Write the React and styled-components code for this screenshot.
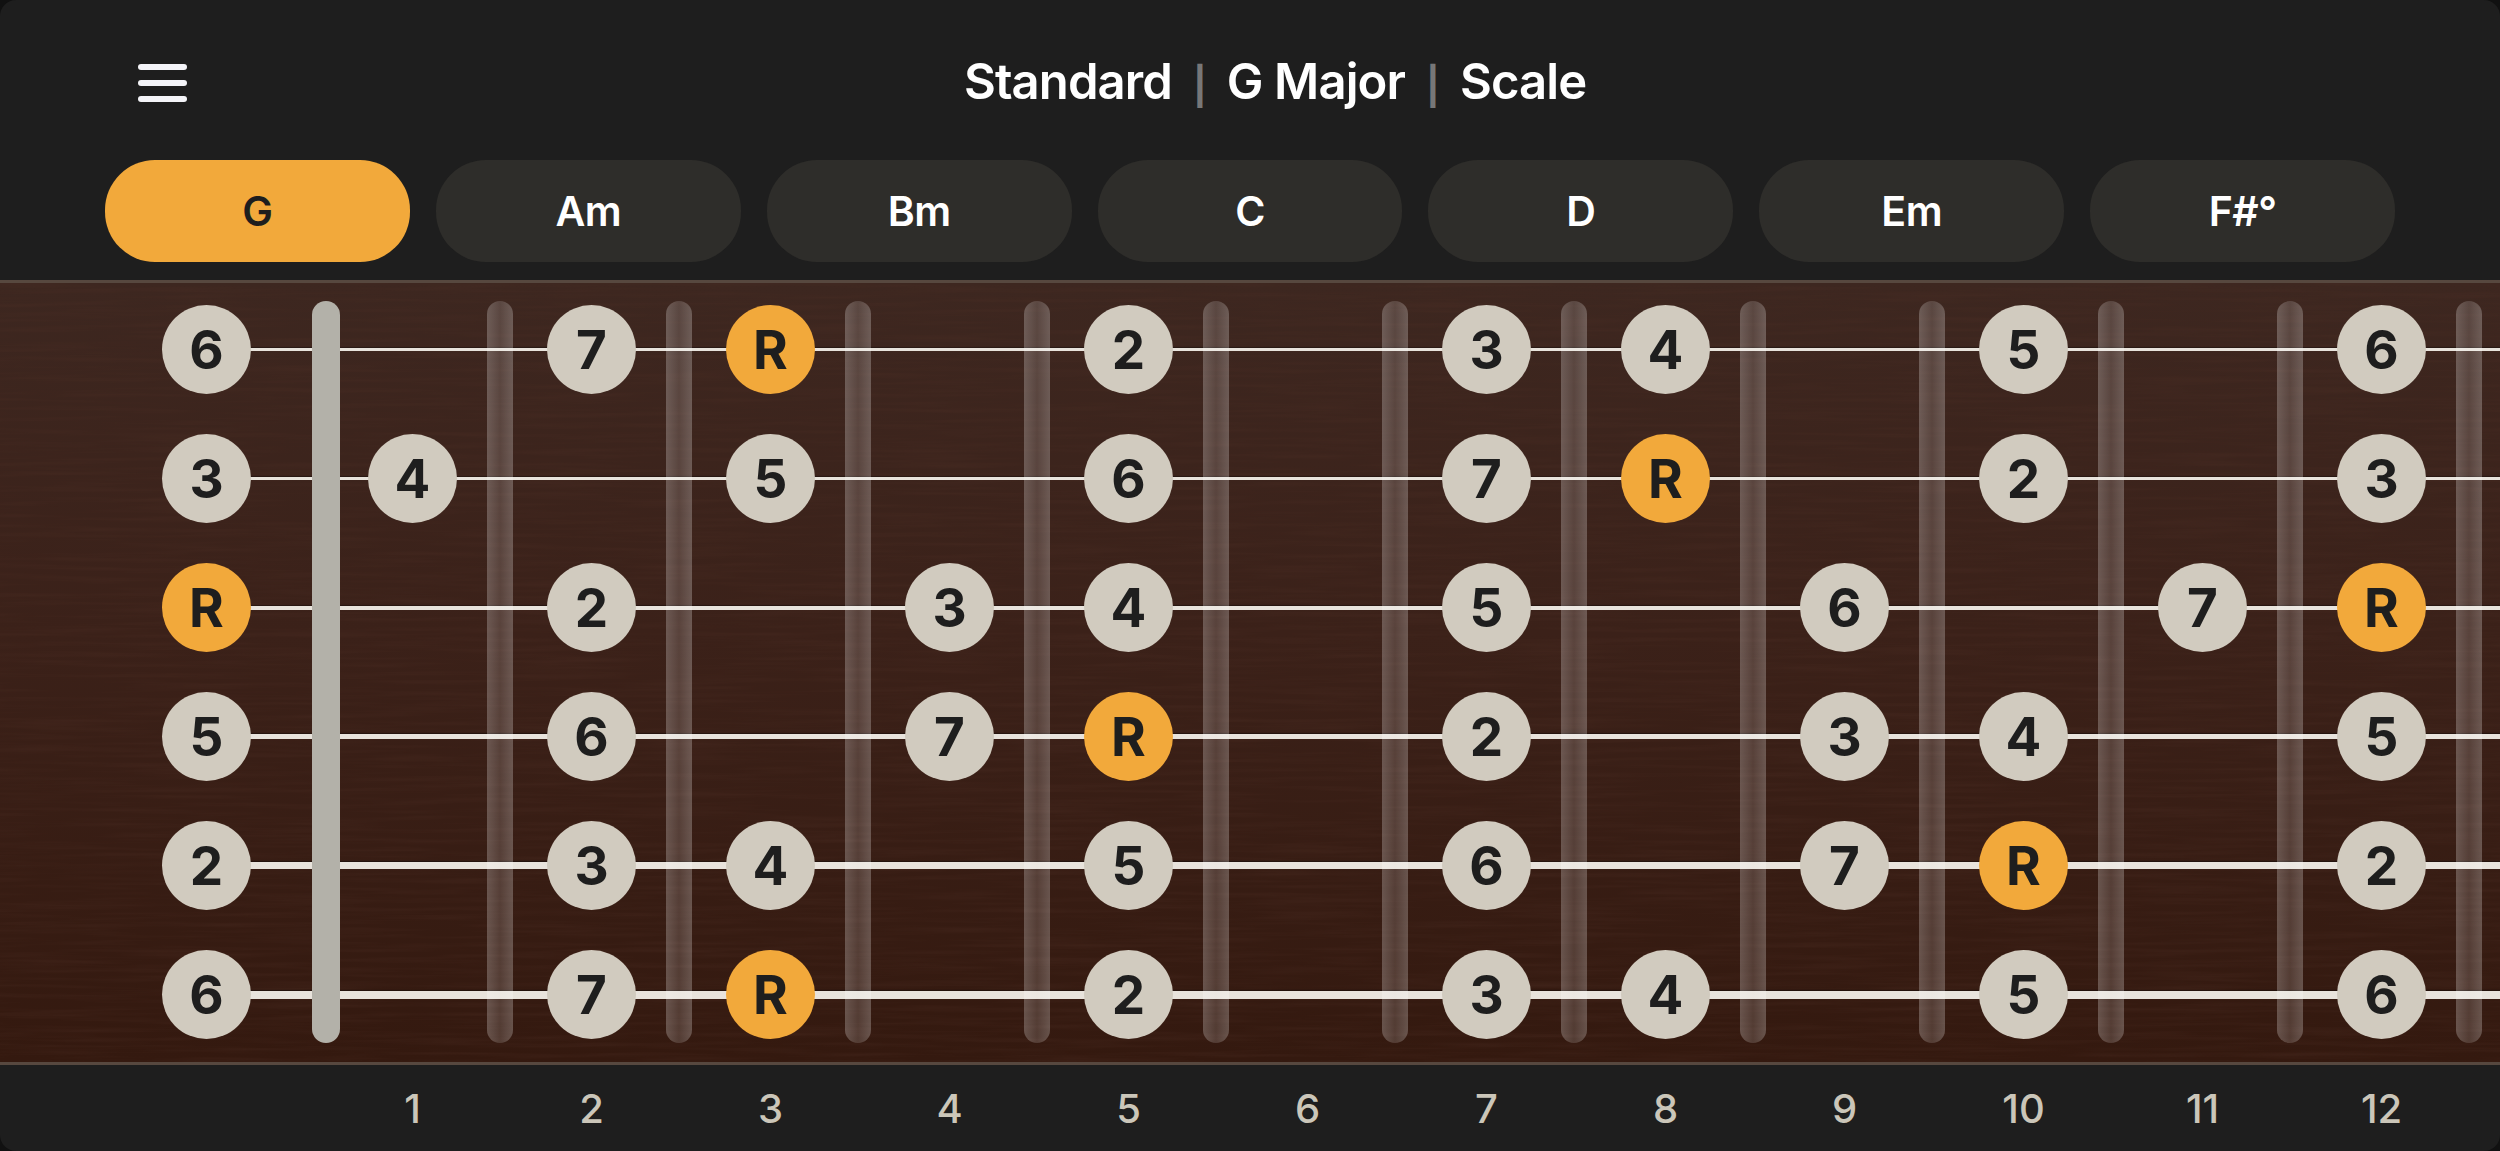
import React from "react";
import styled, { createGlobalStyle } from "styled-components";

const color = {
  page: "#1e1e1e",
  chip: "#2e2d2a",
  accent: "#f2a93b",
  note: "#d1cbbf",
  dark: "#1e1e1e",
  edge: "#57483f",
};

// open string column, a small step over the nut, then the 12 frets
const fretColumns = "179px 27px repeat(12, 179px)";

const chords = ["G", "Am", "Bm", "C", "D", "Em", "F#°"];
const outerStrings = { 0: "6", 2: "7", 3: "R", 5: "2", 7: "3", 8: "4", 10: "5", 12: "6" };
const strings = [
  { gauge: 3, notes: outerStrings },
  { gauge: 3, notes: { 0: "3", 1: "4", 3: "5", 5: "6", 7: "7", 8: "R", 10: "2", 12: "3" } },
  { gauge: 4, notes: { 0: "R", 2: "2", 4: "3", 5: "4", 7: "5", 9: "6", 11: "7", 12: "R" } },
  { gauge: 5, notes: { 0: "5", 2: "6", 4: "7", 5: "R", 7: "2", 9: "3", 10: "4", 12: "5" } },
  { gauge: 7, notes: { 0: "2", 2: "3", 3: "4", 5: "5", 7: "6", 9: "7", 10: "R", 12: "2" } },
  { gauge: 8, notes: outerStrings },
];
const frets = Array.from({ length: 12 }, (_, i) => i + 1);

const GlobalStyle = createGlobalStyle`
  html, body {
    margin: 0;
    height: 100%;
    background: #111;
  }
  body {
    font-family: Inter, "Liberation Sans", sans-serif;
  }
`;

const Screen = styled.div`
  width: 2500px;
  height: 1151px;
  display: flex;
  flex-direction: column;
  overflow: hidden;
  border-radius: 16px;
  background: ${color.page};
`;

const TopBar = styled.header`
  height: 160px;
  display: flex;
  align-items: center;
  padding-left: 138px;
  gap: 777px;
`;

const MenuIcon = styled.svg`
  width: 49px;
  height: 38px;
  margin-top: 6px;
  flex: none;
`;

const Title = styled.div`
  display: flex;
  align-items: center;
  gap: 21px;
  margin-top: 3px;
  color: #fff;
  font-size: 49px;
  font-weight: 600;
  letter-spacing: -0.9px;
`;

const Divider = styled.span`
  color: #777;
  font-size: 37px;
  font-weight: 700;
  margin-top: 8px;
`;

const ChordRow = styled.nav`
  display: flex;
  gap: 26px;
  padding: 0 105px;
  margin-bottom: 18px;
`;

const Chord = styled.div`
  width: 305px;
  height: 102px;
  display: flex;
  align-items: center;
  justify-content: center;
  border-radius: 50px;
  background: ${(p) => (p.$active ? color.accent : color.chip)};
  color: ${(p) => (p.$active ? color.dark : "#fff")};
  font-size: 41px;
  font-weight: 600;
  letter-spacing: -0.5px;
`;

const Fretboard = styled.main`
  position: relative;
  height: 785px;
  box-sizing: border-box;
  padding-top: 2px;
  border-top: 3px solid ${color.edge};
  border-bottom: 3px solid ${color.edge};
  background: linear-gradient(180deg, #3d2720 0%, #3b2119 45%, #34190f 100%);
`;

const Grain = styled.svg`
  position: absolute;
  inset: 0;
  width: 100%;
  height: 100%;
`;

const FretLayer = styled.div`
  position: absolute;
  inset: 18px 0 19px 312px;
  z-index: 1;
  display: flex;
  gap: 153px;
`;

const Nut = styled.div`
  width: 28px;
  margin-right: -6px;
  border-radius: 14px;
  background: #b3b1a9;
`;

const Fret = styled.div`
  width: 26px;
  border-radius: 13px;
  background: linear-gradient(
    90deg,
    rgba(255, 255, 255, 0.25) 0%,
    rgba(255, 255, 255, 0.15) 50%,
    rgba(255, 255, 255, 0.25) 100%
  );
`;

const StringRow = styled.div`
  position: relative;
  height: 129px;
  padding-left: 117px;
  display: grid;
  grid-template-columns: ${fretColumns};
  align-items: center;
  justify-items: center;

  &::before {
    content: "";
    position: absolute;
    left: 206px;
    right: 0;
    top: calc(50% - ${(p) => p.$gauge / 2}px);
    height: ${(p) => p.$gauge}px;
    background: #e8e3dc;
    box-shadow: 0 -1px 1px rgba(0, 0, 0, 0.35);
  }
`;

const Note = styled.div`
  position: relative;
  z-index: 2;
  grid-row: 1;
  grid-column: ${(p) => (p.$fret === 0 ? 1 : p.$fret + 2)};
  width: 89px;
  height: 89px;
  display: flex;
  align-items: center;
  justify-content: center;
  border-radius: 50%;
  background: ${(p) => (p.$root ? color.accent : color.note)};
  color: ${color.dark};
  font-size: 53px;
  font-weight: 700;
`;

const FretNumbers = styled.footer`
  flex: 1;
  padding-left: 117px;
  display: grid;
  grid-template-columns: ${fretColumns};
  align-items: center;
  justify-items: center;
  color: #cbc6b9;
  font-size: 40px;
  font-weight: 500;
`;

const FretNumber = styled.span`
  grid-column: ${(p) => p.$fret + 2};
`;

export default function App() {
  return (
    <>
      <GlobalStyle />
      <Screen>
        <TopBar>
          <MenuIcon viewBox="0 0 49 38" fill="#f4f4f8">
            <rect x="0" y="0" width="49" height="6" rx="3" />
            <rect x="0" y="16" width="49" height="6" rx="3" />
            <rect x="0" y="32" width="49" height="6" rx="3" />
          </MenuIcon>
          <Title>
            <span>Standard</span>
            <Divider>|</Divider>
            <span>G Major</span>
            <Divider>|</Divider>
            <span>Scale</span>
          </Title>
        </TopBar>

        <ChordRow>
          {chords.map((chord, i) => (
            <Chord key={chord} $active={i === 0}>
              {chord}
            </Chord>
          ))}
        </ChordRow>

        <Fretboard>
          <Grain aria-hidden="true">
            <filter id="wood">
              <feTurbulence type="fractalNoise" baseFrequency="0.008 0.2" numOctaves="3" seed="11" />
              <feColorMatrix
                type="matrix"
                values="0 0 0 0 0.08  0 0 0 0 0.03  0 0 0 0 0.02  1.6 0 0 0 -0.62"
              />
            </filter>
            <rect width="100%" height="100%" filter="url(#wood)" opacity="0.35" />
          </Grain>

          <FretLayer>
            <Nut />
            {frets.map((fret) => (
              <Fret key={fret} />
            ))}
          </FretLayer>

          {strings.map((string, i) => (
            <StringRow key={i} $gauge={string.gauge}>
              {Object.entries(string.notes).map(([fret, label]) => (
                <Note key={fret} $fret={Number(fret)} $root={label === "R"}>
                  {label}
                </Note>
              ))}
            </StringRow>
          ))}
        </Fretboard>

        <FretNumbers>
          {frets.map((fret) => (
            <FretNumber key={fret} $fret={fret}>
              {fret}
            </FretNumber>
          ))}
        </FretNumbers>
      </Screen>
    </>
  );
}
